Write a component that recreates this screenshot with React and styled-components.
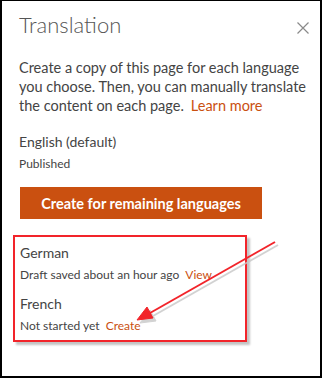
import React from "react"
import styled, { createGlobalStyle } from "styled-components"

const GlobalStyle = createGlobalStyle`
  html, body {
    margin: 0;
    padding: 0;
    background: #fff;
  }
  body {
    font-family: Lato, "Open Sans", sans-serif;
  }
`

const App = () => {
  return (
    <>
      <GlobalStyle />
      <Frame>
        <Header>
          <Title>Translation</Title>
          <CloseButton aria-label="Close">
            <svg width="12" height="12" viewBox="0 0 12 12">
              <path d="M0.5 0.5 L11.5 11.5 M11.5 0.5 L0.5 11.5" stroke="#8a8a8a" strokeWidth="1.2" fill="none" />
            </svg>
          </CloseButton>
        </Header>
        <Intro>
          Create a copy of this page for each language you choose. Then, you can manually translate
          the content on each page.<Link $gap={7}>Learn more</Link>
        </Intro>
        <Language>
          <LangName>English (default)</LangName>
          <Status>Published</Status>
        </Language>
        <PrimaryButton>Create for remaining languages</PrimaryButton>
        <Highlight>
          <Language>
            <LangName>German</LangName>
            <Status>
              Draft saved about an hour ago <Link>View</Link>
            </Status>
          </Language>
          <Language>
            <LangName>French</LangName>
            <Status>
              Not started yet <Link>Create</Link>
            </Status>
          </Language>
        </Highlight>
        <Arrow width="322" height="378" viewBox="0 0 322 378">
          <g transform="translate(3 3)" fill="#c8c8c8" stroke="#c8c8c8" opacity="0.8">
            <line x1="275" y1="242" x2="150" y2="313" strokeWidth="2" />
            <polygon points="137,320 147,307 153,318" />
          </g>
          <g fill="#f2242a" stroke="#f2242a">
            <line x1="275" y1="242" x2="150" y2="313" strokeWidth="2" />
            <polygon points="137,320 147,307 153,318" />
          </g>
        </Arrow>
      </Frame>
    </>
  )
}
export default App

const Frame = styled.div`
  position: relative;
  box-sizing: border-box;
  width: 322px;
  height: 378px;
  border: 2px solid #000;
  border-top-width: 1px;
  padding: 0 0 0 17px;
  color: #333;
`

const Header = styled.div`
  display: flex;
  justify-content: space-between;
  align-items: center;
  height: 48px;
`

const Title = styled.h1`
  margin: 0 0 2px;
  font-size: 22px;
  font-weight: 300;
  color: #555;
`

const CloseButton = styled.div`
  display: flex;
  width: 12px;
  height: 12px;
  margin-right: 11px;
  margin-top: 6px;
`

const Intro = styled.p`
  margin: 9px 0 0;
  width: 290px;
  font-size: 14.5px;
  line-height: 19px;
  color: #444;
`

const Link = styled.span`
  color: #ca5010;
  margin-left: ${(p) => p.$gap ?? 3}px;
`

const Language = styled.div`
  display: flex;
  flex-direction: column;
  gap: 3px;
  margin-top: 17px;
`

const LangName = styled.div`
  font-size: 14px;
  line-height: 20px;
  color: #444;
`

const Status = styled.div`
  font-size: 12px;
  line-height: 18px;
  color: #444;
`

const PrimaryButton = styled.button`
  display: block;
  box-sizing: border-box;
  width: 242px;
  height: 32px;
  margin: 14px 0 0 1px;
  border: none;
  background: #ca5010;
  color: #fff;
  font-family: Lato, "Open Sans", sans-serif;
  font-weight: 700;
  font-size: 14.5px;
  padding: 0;
`

const Highlight = styled.div`
  box-sizing: border-box;
  width: 234px;
  height: 107px;
  margin: 16px 0 0 -6px;
  padding: 0 0 0 5px;
  border: 2px solid #f2242a;
  box-shadow: 3px 3px 2px #c4c4c4;

  & > div:first-child {
    margin-top: 6px;
  }
  & > div + div {
    margin-top: 10px;
  }
`

const Arrow = styled.svg`
  position: absolute;
  left: -2px;
  top: -1px;
  pointer-events: none;
`
